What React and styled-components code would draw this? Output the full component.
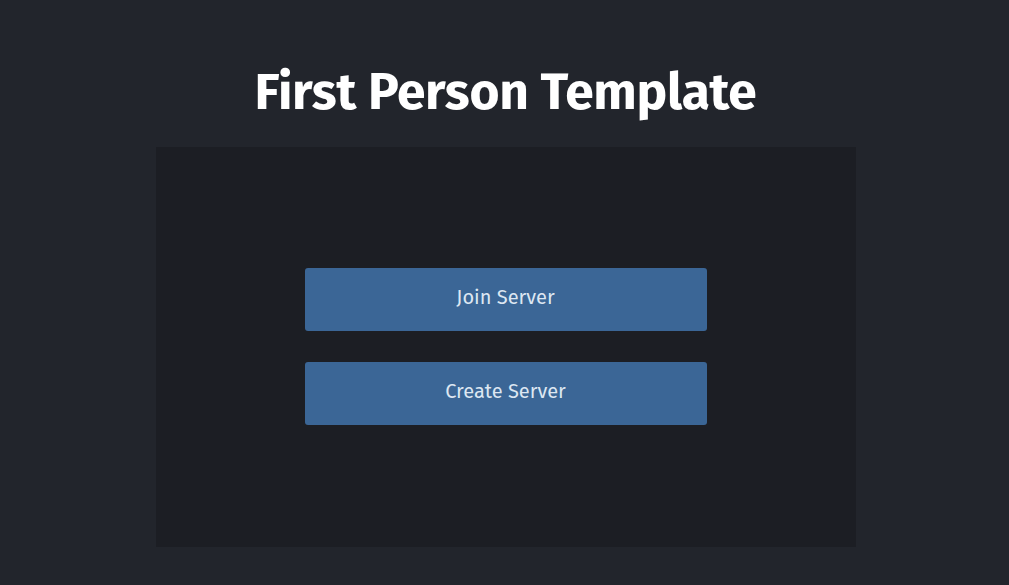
import styled, { createGlobalStyle } from "styled-components";

const GlobalStyle = createGlobalStyle`
  html, body {
    margin: 0;
    padding: 0;
    background: #22252c;
    font-family: "Fira Sans", "Open Sans", "Noto Sans", sans-serif;
  }
`;

const Page = styled.div`
  min-height: 585px;
  display: flex;
  flex-direction: column;
  align-items: center;
  padding: 58px 0 0 2px;
  box-sizing: border-box;
`;

const Title = styled.h1`
  margin: 0;
  height: 89px;
  font-size: 51.5px;
  font-weight: 700;
  color: #ffffff;
  line-height: 68px;
  letter-spacing: -0.3px;
`;

const Panel = styled.div`
  width: 700px;
  height: 400px;
  padding-bottom: 2px;
  box-sizing: border-box;
  background: #1c1e24;
  display: flex;
  flex-direction: column;
  align-items: center;
  justify-content: center;
  gap: 31px;
`;

const MenuButton = styled.button`
  width: 402px;
  height: 63px;
  padding: 0 0 4px;
  border: none;
  border-radius: 3px;
  background: #3b6696;
  color: #dde7f2;
  font-family: inherit;
  font-size: 20px;
  font-weight: 400;
  cursor: pointer;

  &:hover {
    background: #4572a4;
  }
`;

export default function App() {
  return (
    <>
      <GlobalStyle />
      <Page>
        <Title>First Person Template</Title>
        <Panel>
          <MenuButton>Join Server</MenuButton>
          <MenuButton>Create Server</MenuButton>
        </Panel>
      </Page>
    </>
  );
}
